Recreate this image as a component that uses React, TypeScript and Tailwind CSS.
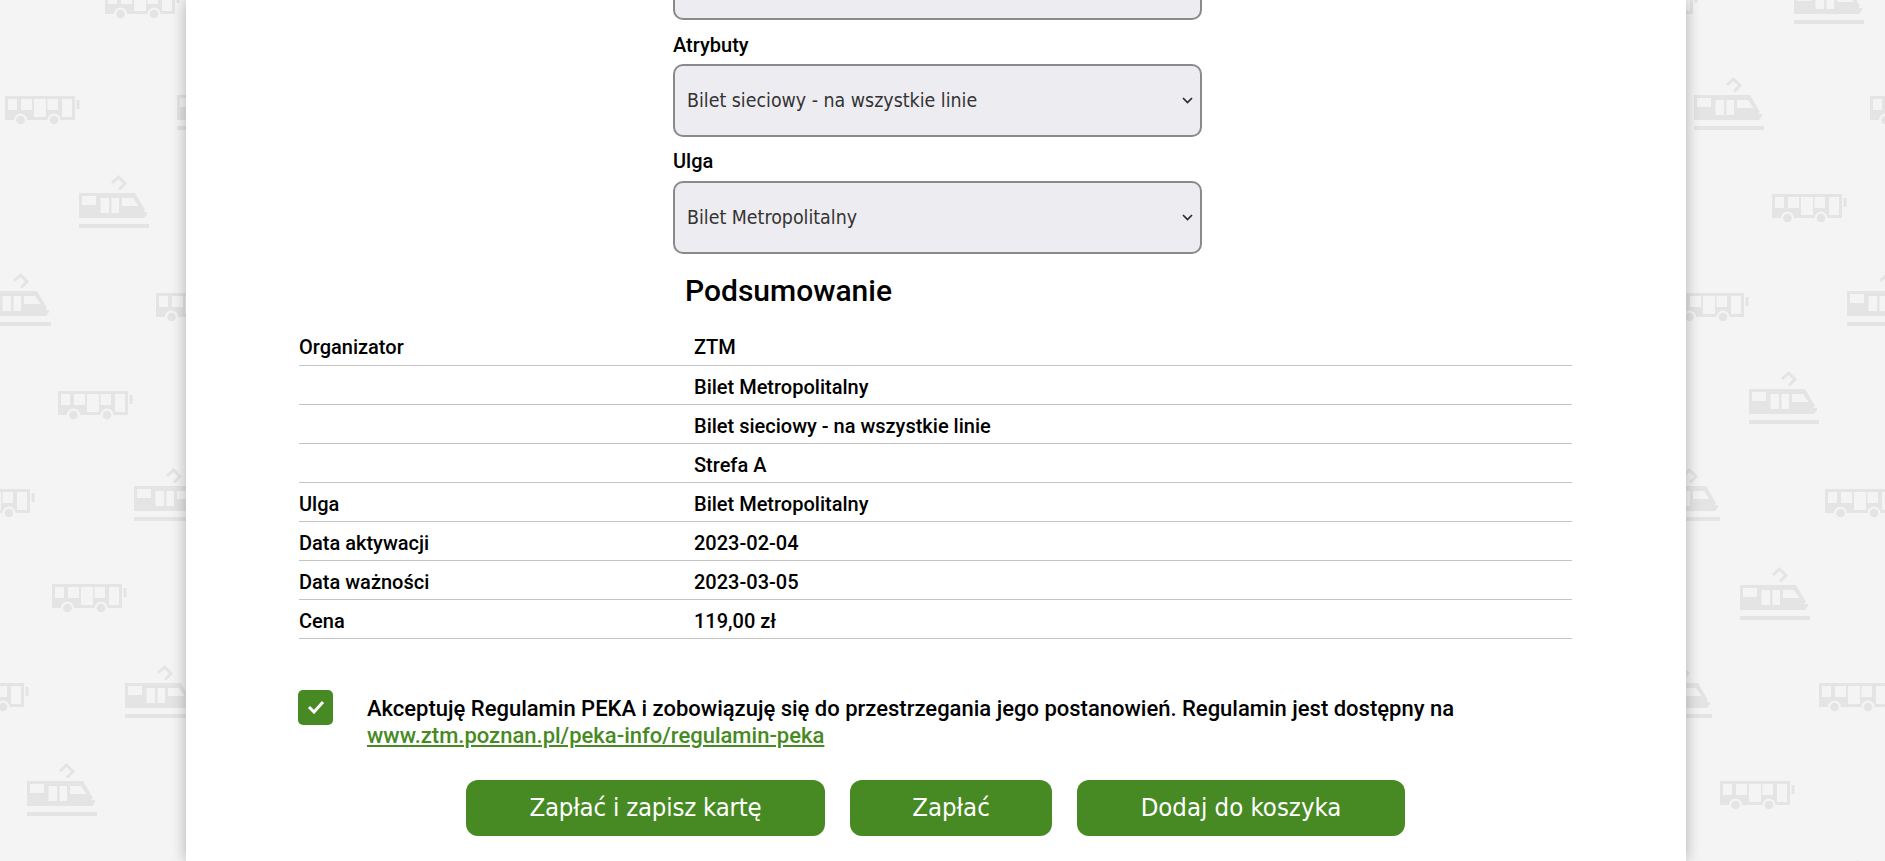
import React from "react";

const buses: [number, number][] = [
  [105, -10], [5, 96], [58, 391], [156, 293], [-40, 489], [52, 584], [-46, 683],
  [1623, -10], [1870, 96], [1772, 194], [1674, 293], [1825, 489], [1819, 683], [1720, 781],
];
const trams: [number, number][] = [
  [79, 175], [177, 77], [-19, 273], [134, 468], [125, 665], [27, 763],
  [1794, -29], [1694, 77], [1847, 273], [1749, 371], [1650, 468], [1740, 567], [1642, 665], [1818, 860],
];

function Pattern() {
  return (
    <svg className="absolute inset-0" width="1885" height="861" aria-hidden="true">
      <defs>
        <g id="bus">
          <path d="M0 0H70V24H0Q0 24 0 22Z" fill="#e4e4e4" />
          <rect x="71.5" y="4" width="3" height="9" fill="#e4e4e4" />
          <path d="M3 3H12V14H3ZM16 3H27V14H16ZM29 3H41V21H29ZM42.5 3H53V14H42.5ZM57 3H67V21H57Z" fill="#f4f4f4" />
          <circle cx="15.5" cy="24" r="6.5" fill="#f4f4f4" />
          <circle cx="49" cy="24" r="6.5" fill="#f4f4f4" />
          <circle cx="15.5" cy="24" r="4.3" fill="#e4e4e4" />
          <circle cx="49" cy="24" r="4.3" fill="#e4e4e4" />
        </g>
        <g id="tram">
          <path d="M33 8L39.5 2L46 8.5L40 14.5" fill="none" stroke="#e4e4e4" strokeWidth="3" />
          <path d="M0 18H56L66 35L64 37H68V39L65 43H0Z" fill="#e4e4e4" />
          <path d="M3 21H17V30H3ZM21.5 23H30V38H21.5ZM32.5 23H40V38H32.5ZM43 23H54L59.5 31H43Z" fill="#f4f4f4" />
          <rect x="0" y="49" width="70" height="4" fill="#e4e4e4" />
        </g>
      </defs>
      {buses.map(([x, y], i) => (
        <use key={"b" + i} href="#bus" x={x} y={y} />
      ))}
      {trams.map(([x, y], i) => (
        <use key={"t" + i} href="#tram" x={x} y={y} />
      ))}
    </svg>
  );
}

const rows: [string, string][] = [
  ["Organizator", "ZTM"],
  ["", "Bilet Metropolitalny"],
  ["", "Bilet sieciowy - na wszystkie linie"],
  ["", "Strefa A"],
  ["Ulga", "Bilet Metropolitalny"],
  ["Data aktywacji", "2023-02-04"],
  ["Data ważności", "2023-03-05"],
  ["Cena", "119,00 zł"],
];

const selectCls =
  "block w-[529px] h-[73px] appearance-none rounded-[10px] border-2 border-[#8a8a8a] bg-[#edecf1] pl-[12px] pr-[24px] pt-[1px] font-['DejaVu_Sans_Condensed','DejaVu_Sans',sans-serif] text-[19.4px] text-[#333333]";
const btnCls =
  "h-[56px] rounded-[12px] bg-[#478a23] text-[#ffffff] font-['DejaVu_Sans_Condensed','DejaVu_Sans',sans-serif] text-[25.5px]";

function Select({ label, className = "" }: { label: string; className?: string }) {
  return (
    <div className={"relative " + className}>
      <select className={selectCls} defaultValue="a">
        <option value="a">{label}</option>
      </select>
      <svg
        className="pointer-events-none absolute top-[33px] right-[9px]"
        width="11"
        height="7"
        viewBox="0 0 11 7"
        fill="none"
        stroke="#2b2b2b"
        strokeWidth="1.7"
      >
        <path d="M1 1L5.5 5.5L10 1" />
      </svg>
    </div>
  );
}

export default function App() {
  return (
    <div className="relative h-[861px] w-[1885px] overflow-hidden bg-[#f4f4f4] font-['Roboto',sans-serif] text-black">
      <Pattern />
      <main className="relative ml-[186px] flow-root h-[861px] w-[1500px] bg-white shadow-[0_0_14px_rgba(0,0,0,0.28)]">
        <form className="ml-[487px] w-[529px]">
          <Select label="Strefa A" className="-mt-[53px]" />
          <label className="block h-[44px] pt-[11px] text-[20px] leading-[28px] font-medium">Atrybuty</label>
          <Select label="Bilet sieciowy - na wszystkie linie" />
          <label className="block h-[44px] pt-[10px] text-[20px] leading-[28px] font-medium">Ulga</label>
          <Select label="Bilet Metropolitalny" />
          <h2 className="mt-[18px] ml-[12px] text-[30px] leading-[38px] font-medium">Podsumowanie</h2>
        </form>
        <table className="mt-[16px] ml-[113px] w-[1273px] border-collapse text-[20px] font-medium">
          <tbody>
            {rows.map(([k, v], i) => (
              <tr key={i} className="h-[39px] border-b border-[#c4c4c4]">
                <td className="w-[395px] p-0 pt-[4px]">{k}</td>
                <td className="p-0 pt-[4px]">{v}</td>
              </tr>
            ))}
          </tbody>
        </table>
        <div className="mt-[51px] ml-[112px] flex">
          <div className="flex h-[35px] w-[35px] items-center justify-center rounded-[5px] bg-[#478a23]">
            <svg width="18" height="14" viewBox="0 0 18 14" fill="none" stroke="#ffffff" strokeWidth="3">
              <path d="M2 7L7 12L16 2" />
            </svg>
          </div>
          <p className="ml-[34px] w-[1150px] pt-[5px] text-[22px] leading-[27px] font-medium">
            Akceptuję Regulamin PEKA i zobowiązuję się do przestrzegania jego postanowień. Regulamin jest dostępny na{" "}
            <a className="text-[#478a23] underline" href="#">www.ztm.poznan.pl/peka-info/regulamin-peka</a>
          </p>
        </div>
        <div className="mt-[31px] ml-[280px] flex">
          <button type="button" className={btnCls + " w-[359px] tracking-[-0.2px]"}>Zapłać i zapisz kartę</button>
          <button type="button" className={btnCls + " ml-[25px] w-[202px]"}>Zapłać</button>
          <button type="button" className={btnCls + " ml-[25px] w-[328px]"}>Dodaj do koszyka</button>
        </div>
      </main>
    </div>
  );
}
